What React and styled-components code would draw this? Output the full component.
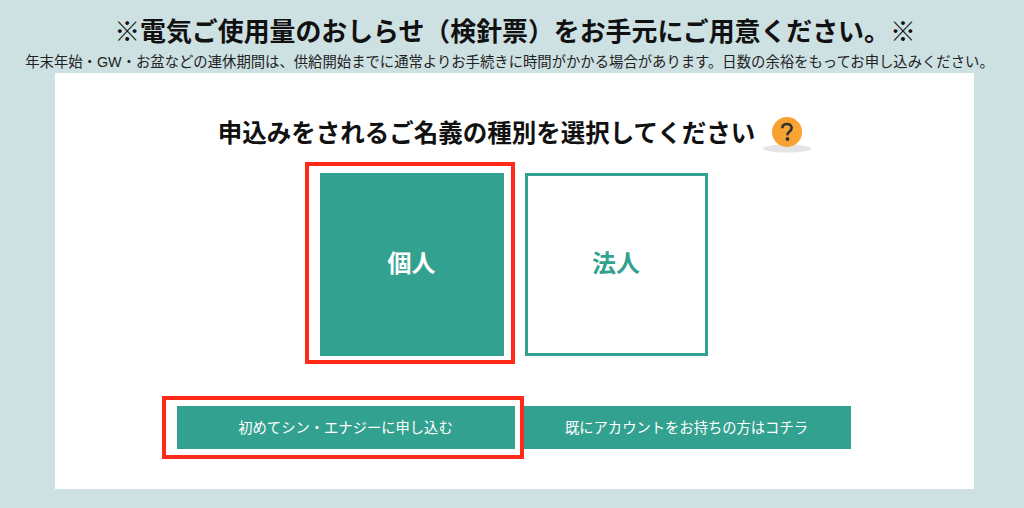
import React from "react";
import styled, { createGlobalStyle } from "styled-components";

const Global = createGlobalStyle`
  html, body { margin: 0; padding: 0; background: #cde0e2; }
  body { font-family: "Liberation Sans", "Noto Sans CJK JP", sans-serif; color: #000; }
`;

const Page = styled.div`
  width: 1024px;
  height: 508px;
  overflow: hidden;
  display: flex;
  flex-direction: column;
  align-items: center;
  background: #cde0e2;
`;

const Title = styled.h1`
  margin: 15px 0 0 6px;
  font-size: 25.9px;
  line-height: 34px;
  font-weight: 700;
  white-space: nowrap;
  color: #111;
`;

const Note = styled.p`
  margin: 3px 5px 0 0;
  font-size: 14.35px;
  line-height: 20px;
  white-space: nowrap;
  color: #222;
`;

const Panel = styled.main`
  box-sizing: border-box;
  width: 919px;
  height: 416px;
  margin: 1px 0 0 5px;
  padding-right: 2px;
  background: #fff;
  display: flex;
  flex-direction: column;
  align-items: center;
`;

const HeadingRow = styled.div`
  margin: 42px 0 0 3px;
  height: 36px;
  display: flex;
  align-items: center;
  gap: 7px;
`;

const Heading = styled.h2`
  margin: 2px 0 0;
  font-size: 24.5px;
  line-height: 36px;
  font-weight: 700;
  white-space: nowrap;
  color: #111;
`;

const HelpIcon = styled.svg`
  width: 50px;
  height: 38px;
  display: block;
  margin-top: 6px;
`;

const SquareRow = styled.div`
  margin-top: 22px;
  display: flex;
  gap: 21px;
`;

const Highlight = styled.div`
  position: relative;
  display: flex;

  &::after {
    content: "";
    position: absolute;
    box-sizing: border-box;
    border: 4px solid #ff2a17;
    pointer-events: none;
    top: ${(p) => p.$top}px;
    bottom: ${(p) => p.$bottom}px;
    left: ${(p) => p.$left}px;
    right: ${(p) => p.$right}px;
  }
`;

const Square = styled.button`
  box-sizing: border-box;
  width: ${(p) => (p.$active ? 184 : 183)}px;
  height: 183px;
  padding: 0 0 2px;
  border: 3px solid #33a18f;
  background: ${(p) => (p.$active ? "#33a18f" : "#fff")};
  color: ${(p) => (p.$active ? "#fff" : "#33a18f")};
  font-family: inherit;
  font-size: 24px;
  font-weight: 700;
  line-height: 1;
`;

const ButtonRow = styled.div`
  margin-top: 50px;
  display: flex;
  gap: 8px;
`;

const Action = styled.button`
  box-sizing: border-box;
  width: ${(p) => p.$w}px;
  height: 43px;
  padding: 0 0 2px;
  border: 0;
  background: #33a18f;
  color: #fff;
  font-family: inherit;
  font-size: 14.3px;
  font-weight: 400;
  white-space: nowrap;
`;

export default function App() {
  return (
    <Page>
      <Global />
      <Title>※電気ご使用量のおしらせ（検針票）をお手元にご用意ください。※</Title>
      <Note>年末年始・GW・お盆などの連休期間は、供給開始までに通常よりお手続きに時間がかかる場合があります。日数の余裕をもってお申し込みください。</Note>
      <Panel>
        <HeadingRow>
          <Heading>申込みをされるご名義の種別を選択してください</Heading>
          <HelpIcon viewBox="0 0 50 38" aria-hidden="true">
            <ellipse cx="25" cy="31.5" rx="24" ry="4" fill="#e4e4e4" />
            <circle cx="25" cy="15" r="15" fill="#f8a133" />
            <path d="M36 5 A15 15 0 0 1 33 27.6 L20 10 Z" fill="#fba735" opacity="0.6" />
            <path
              d="M20.3 11.2 C20.3 8.6 22.3 7 25 7 C27.8 7 29.6 8.7 29.6 11 C29.6 12.9 28.5 13.8 27.2 14.8 C26 15.7 25.5 16.5 25.5 18.2"
              fill="none"
              stroke="#333"
              strokeWidth="2.7"
            />
            <circle cx="25.5" cy="22" r="1.9" fill="#333" />
          </HelpIcon>
        </HeadingRow>
        <SquareRow>
          <Highlight $top={-11} $bottom={-8} $left={-15} $right={-11}>
            <Square $active>個人</Square>
          </Highlight>
          <Square>法人</Square>
        </SquareRow>
        <ButtonRow>
          <Highlight $top={-10} $bottom={-10} $left={-15} $right={-9}>
            <Action $w={338}>初めてシン・エナジーに申し込む</Action>
          </Highlight>
          <Action $w={328}>既にアカウントをお持ちの方はコチラ</Action>
        </ButtonRow>
      </Panel>
    </Page>
  );
}
